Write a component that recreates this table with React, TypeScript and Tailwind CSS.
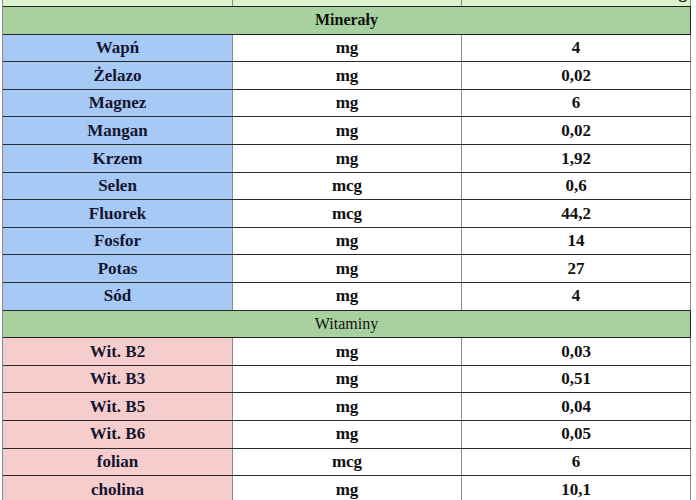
import React from "react";

type Row = { kind: "head"; label: string; bold: boolean } | { kind: "data"; name: string; unit: string; value: string; color: string };

const BLUE = "bg-[#a7c9f6]";
const PINK = "bg-[#f5cdcd]";

const rows: Row[] = [
  { kind: "head", label: "Minerały", bold: true },
  { kind: "data", name: "Wapń", unit: "mg", value: "4", color: BLUE },
  { kind: "data", name: "Żelazo", unit: "mg", value: "0,02", color: BLUE },
  { kind: "data", name: "Magnez", unit: "mg", value: "6", color: BLUE },
  { kind: "data", name: "Mangan", unit: "mg", value: "0,02", color: BLUE },
  { kind: "data", name: "Krzem", unit: "mg", value: "1,92", color: BLUE },
  { kind: "data", name: "Selen", unit: "mcg", value: "0,6", color: BLUE },
  { kind: "data", name: "Fluorek", unit: "mcg", value: "44,2", color: BLUE },
  { kind: "data", name: "Fosfor", unit: "mg", value: "14", color: BLUE },
  { kind: "data", name: "Potas", unit: "mg", value: "27", color: BLUE },
  { kind: "data", name: "Sód", unit: "mg", value: "4", color: BLUE },
  { kind: "head", label: "Witaminy", bold: false },
  { kind: "data", name: "Wit. B2", unit: "mg", value: "0,03", color: PINK },
  { kind: "data", name: "Wit. B3", unit: "mg", value: "0,51", color: PINK },
  { kind: "data", name: "Wit. B5", unit: "mg", value: "0,04", color: PINK },
  { kind: "data", name: "Wit. B6", unit: "mg", value: "0,05", color: PINK },
  { kind: "data", name: "folian", unit: "mcg", value: "6", color: PINK },
  { kind: "data", name: "cholina", unit: "mg", value: "10,1", color: PINK },
];

export default function App() {
  return (
    <div
      className="w-[696px] h-[500px] overflow-hidden bg-white text-[17px] text-[#111]"
      style={{ fontFamily: '"Liberation Serif", "Times New Roman", serif' }}
    >
      <div className="ml-[2px] w-[689px] -mt-[20.6px] border-l border-[#8a8a8a]">
        {/* top cut-off row */}
        <div className="grid grid-cols-[230px_229px_229px] h-[27.6px] bg-[#dcf4cd] border-b border-[#222]">
          <div className="border-r border-[#7a9a70]" />
          <div className="border-r border-[#7a9a70]" />
          <div className="border-r border-[#7a9a70] flex items-center justify-end pr-[3px] font-bold">
            100 g
          </div>
        </div>
        {rows.map((r, i) =>
          r.kind === "head" ? (
            <div
              key={i}
              className={`h-[27.6px] bg-[#a9d19f] border-b border-r border-[#222] flex items-center justify-center text-[16px] ${
                r.bold ? "font-bold" : "font-normal"
              }`}
            >
              {r.label}
            </div>
          ) : (
            <div
              key={i}
              className="grid grid-cols-[230px_229px_229px] h-[27.6px] border-b border-[#2a2a2a] font-bold"
            >
              <div className={`${r.color} border-r border-[#8a8a8a] flex items-center justify-center text-[#151530]`}>
                {r.name}
              </div>
              <div className="bg-white border-r border-[#8a8a8a] flex items-center justify-center">
                {r.unit}
              </div>
              <div className="bg-white border-r border-[#8a8a8a] flex items-center justify-center">
                {r.value}
              </div>
            </div>
          )
        )}
      </div>
    </div>
  );
}
